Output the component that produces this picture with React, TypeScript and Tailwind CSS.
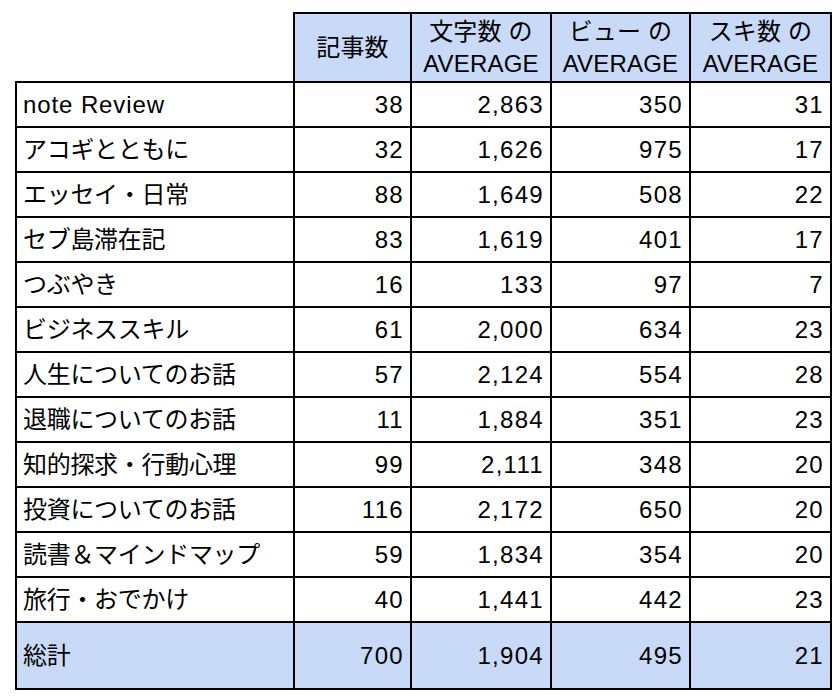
import React from "react";

const rows: [string, string, string, string, string][] = [
  ["note Review", "38", "2,863", "350", "31"],
  ["アコギとともに", "32", "1,626", "975", "17"],
  ["エッセイ・日常", "88", "1,649", "508", "22"],
  ["セブ島滞在記", "83", "1,619", "401", "17"],
  ["つぶやき", "16", "133", "97", "7"],
  ["ビジネススキル", "61", "2,000", "634", "23"],
  ["人生についてのお話", "57", "2,124", "554", "28"],
  ["退職についてのお話", "11", "1,884", "351", "23"],
  ["知的探求・行動心理", "99", "2,111", "348", "20"],
  ["投資についてのお話", "116", "2,172", "650", "20"],
  ["読書＆マインドマップ", "59", "1,834", "354", "20"],
  ["旅行・おでかけ", "40", "1,441", "442", "23"],
];

const total: [string, string, string, string, string] = ["総計", "700", "1,904", "495", "21"];

function HeadCell({ top, bottom }: { top: string; bottom?: string }) {
  return (
    <th className="border-2 border-black bg-[#c9daf8] p-0 text-center align-middle font-normal">
      <div className="flex flex-col items-center justify-center leading-[32px] tracking-[0.2px]">
        <span>{top}</span>
        {bottom ? <span>{bottom}</span> : null}
      </div>
    </th>
  );
}

function Row({ r, className }: { r: [string, string, string, string, string]; className: string }) {
  const latin = /^[\x20-\x7e]+$/.test(r[0]);
  return (
    <tr className={className}>
      <td className="border-2 border-black py-0 pl-[6px] text-left align-middle">
        <span className={latin ? "tracking-[0.9px]" : "tracking-[-0.3px]"}>{r[0]}</span>
      </td>
      {r.slice(1).map((v, i) => (
        <td key={i} className="border-2 border-black py-0 pr-[6px] text-right align-middle tracking-[1.3px]">
          {v}
        </td>
      ))}
    </tr>
  );
}

export default function App() {
  return (
    <div className="min-h-[700px] w-[840px] bg-white pl-[15px] pt-[12px] text-[24px] text-black [font-family:'Liberation_Sans','Noto_Sans_CJK_JP',sans-serif]">
      <table className="w-[815px] table-fixed border-collapse">
        <colgroup>
          <col className="w-[278px]" />
          <col className="w-[117px]" />
          <col className="w-[140px]" />
          <col className="w-[139px]" />
          <col className="w-[141px]" />
        </colgroup>
        <thead>
          <tr className="h-[69px]">
            <th className="p-0" />
            <HeadCell top="記事数" />
            <HeadCell top="文字数 の" bottom="AVERAGE" />
            <HeadCell top="ビュー の" bottom="AVERAGE" />
            <HeadCell top="スキ数 の" bottom="AVERAGE" />
          </tr>
        </thead>
        <tbody>
          {rows.map((r) => (
            <Row key={r[0]} r={r} className="h-[45px]" />
          ))}
          <Row r={total} className="h-[67px] bg-[#c9daf8]" />
        </tbody>
      </table>
    </div>
  );
}
